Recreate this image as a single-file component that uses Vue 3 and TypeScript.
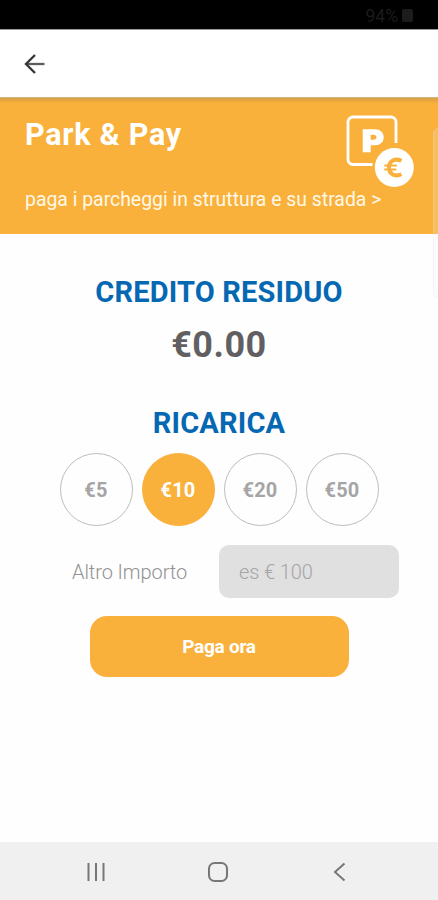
<script setup lang="ts">
import { ref } from 'vue'

const amounts: number[] = [5, 10, 20, 50]
const selected = ref<number>(10)
const custom = ref<string>('')
</script>

<template>
  <div class="screen">
    <div class="status">
      <span>94%</span>
      <i class="battery"></i>
    </div>

    <header class="toolbar">
      <svg class="back" viewBox="0 0 22 22" aria-label="Indietro">
        <path d="M20.5 11H2.5" stroke="#5c5c5e" stroke-width="2.3" />
        <path d="M11 2L2 11l9 9" fill="none" stroke="#38383b" stroke-width="2.4" />
      </svg>
    </header>

    <section class="banner">
      <div class="banner-text">
        <h1>Park &amp; Pay</h1>
        <p>paga i parcheggi in struttura e su strada &gt;</p>
      </div>
      <svg class="park" viewBox="0 0 68 72">
        <path d="M26.500 49.500H7a5 5 0 0 1-5-5V7a5 5 0 0 1 5-5h38a5 5 0 0 1 5 5v21" fill="none" stroke="#fff" stroke-width="2.800" />
        <path fill-rule="evenodd" d="M16.700 14.300h12c5.600 0 9 3.200 9 8s-3.400 8-9 8h-4v7h-8zM24.700 19.800v5h3c1.700 0 2.700-.9 2.700-2.500s-1-2.500-2.700-2.500z" fill="#fff" />
        <circle cx="48.300" cy="52.500" r="19.500" fill="#fff" />
        <path d="M55.500 45.800c-6.500-3-12.500.2-12.500 6.700s6 9.700 12.500 6.700" fill="none" stroke="#f9b13c" stroke-width="4" />
        <path d="M38.300 50.500h12.500M38.300 54.500h12" stroke="#f9b13c" stroke-width="2" />
      </svg>
    </section>

    <main>
      <h2 class="credit-title">CREDITO RESIDUO</h2>
      <div class="credit">€0.00</div>
      <h2 class="recharge-title">RICARICA</h2>
      <div class="amounts">
        <button
          v-for="a in amounts"
          :key="a"
          type="button"
          :class="['amount', { active: a === selected }]"
          @click="selected = a"
        >€{{ a }}</button>
      </div>
      <label class="other">
        <span>Altro Importo</span>
        <input v-model="custom" type="text" placeholder="es € 100" />
      </label>
      <button type="button" class="pay">Paga ora</button>
    </main>

    <nav class="navbar">
      <svg viewBox="0 0 24 24"><path d="M4.500 3v18M12 3v18M19.500 3v18" /></svg>
      <svg viewBox="0 0 24 24"><rect x="3" y="3" width="18" height="18" rx="5.500" /></svg>
      <svg viewBox="0 0 24 24"><path d="M16.500 3.500L7 12l9.500 8.500" /></svg>
    </nav>
    <div class="edge"></div>
  </div>
</template>

<style>
body {
  margin: 0;
}
</style>

<style scoped>
.screen {
  position: relative;
  width: 438px;
  height: 900px;
  display: flex;
  flex-direction: column;
  overflow: hidden;
  background: #fefefe;
  font-family: Roboto, "Liberation Sans", sans-serif;
}
.status {
  box-sizing: border-box;
  height: 30px;
  flex: none;
  display: flex;
  justify-content: flex-end;
  align-items: center;
  gap: 4px;
  padding: 2px 25px 0 0;
  background: #000;
  border-bottom: 1px solid #999;
  color: #1c1c1c;
  font-size: 17.5px;
}
.battery {
  width: 11px;
  height: 13px;
  border-radius: 2px;
  background: #1c1c1c;
}
.toolbar {
  box-sizing: border-box;
  height: 67px;
  flex: none;
  display: flex;
  align-items: center;
  padding-left: 24px;
  background: #fff;
}
.back {
  width: 22px;
  height: 22px;
}
.banner {
  box-sizing: border-box;
  height: 137px;
  flex: none;
  display: flex;
  justify-content: space-between;
  padding: 20px 24px 0 25px;
  background: linear-gradient(#d5b98a 0, #d9a040 2px, #edaa3c 4px, #f9b13c 7px);
  color: #fff;
}
.banner-text {
  flex: none;
  width: 321px;
  white-space: nowrap;
}
h1 {
  margin: 0;
  font-size: 30.5px;
  line-height: 36px;
  font-weight: 700;
  letter-spacing: 0.75px;
}
p {
  margin: 34px 0 0;
  font-size: 19.4px;
  line-height: 26px;
  color: #fff8e6;
}
.park {
  flex: none;
  width: 68px;
  height: 72px;
  margin-top: -2px;
}
main {
  flex: 1;
  display: flex;
  flex-direction: column;
  align-items: center;
}
h2 {
  margin: 0;
  color: #0568b3;
  font-size: 29px;
  line-height: 36px;
  font-weight: 700;
  letter-spacing: 0.17px;
}
.credit-title {
  margin-top: 40px;
}
.credit {
  margin-top: 13px;
  color: #606062;
  font-size: 36px;
  line-height: 44px;
  font-weight: 700;
  letter-spacing: 0.5px;
}
.recharge-title {
  margin-top: 38px;
}
.amounts {
  display: flex;
  gap: 9px;
  margin-top: 12px;
}
.amount {
  box-sizing: border-box;
  width: 73px;
  height: 73px;
  padding: 0;
  border: 1px solid #bdbdbd;
  border-radius: 50%;
  background: transparent;
  color: #a5a5a5;
  font: 700 20px Roboto, sans-serif;
  letter-spacing: 0.2px;
}
.amount.active {
  border-color: #f9b13c;
  background: #f9b13c;
  color: #fff;
}
.other {
  align-self: stretch;
  display: flex;
  justify-content: space-between;
  align-items: center;
  margin-top: 19px;
  padding: 0 39px 0 72px;
  color: #929292;
  font-size: 20px;
  font-weight: 300;
  letter-spacing: -0.08px;
}
input {
  box-sizing: border-box;
  width: 180px;
  height: 53px;
  padding: 0 20px;
  border: 0;
  border-radius: 10px;
  outline: 0;
  background: #e0e0e0;
  color: #777;
  font: 300 20px Roboto, sans-serif;
  letter-spacing: -0.1px;
}
input::placeholder {
  color: #a5a5a5;
  opacity: 1;
}
.pay {
  width: 259px;
  height: 61px;
  margin-top: 18px;
  padding: 0;
  border: 0;
  border-radius: 17px;
  background: #f9b13c;
  color: #fff;
  font: 700 19px Roboto, sans-serif;
  letter-spacing: -0.25px;
}
.navbar {
  box-sizing: border-box;
  height: 58px;
  flex: none;
  display: flex;
  align-items: center;
  justify-content: space-between;
  padding: 2px 86px 0 84px;
  background: #f0f0f0;
}
.navbar svg {
  width: 24px;
  height: 24px;
  fill: none;
  stroke: #777;
  stroke-width: 2;
}
.edge {
  position: absolute;
  top: 128px;
  right: -8px;
  width: 13px;
  height: 170px;
  box-sizing: border-box;
  border: 1px solid rgba(225, 225, 225, 0.25);
  border-radius: 6px;
  background: rgba(245, 245, 245, 0.18);
}
</style>
